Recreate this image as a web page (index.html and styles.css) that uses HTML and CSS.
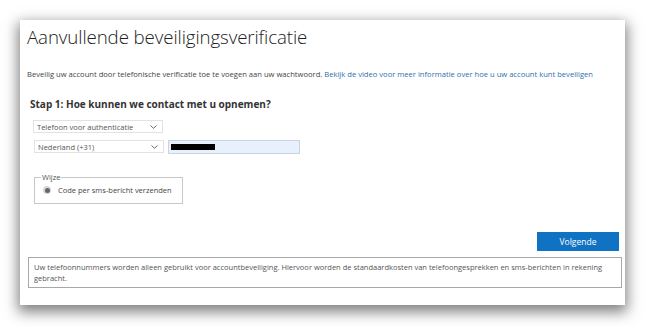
FILE: index.html
```html
<!DOCTYPE html>
<html lang="nl">
<head>
<meta charset="utf-8">
<link rel="stylesheet" href="styles.css">
</head>
<body>
<div class="card">
  <h1 class="title">Aanvullende beveiligingsverificatie</h1>
  <p class="intro">Beveilig uw account door telefonische verificatie toe te voegen aan uw wachtwoord. <a class="link">Bekijk de video voor meer informatie over hoe u uw account kunt beveiligen</a></p>
  <h2 class="step">Stap 1: Hoe kunnen we contact met u opnemen?</h2>
  <div class="row">
    <div class="select"><span>Telefoon voor authenticatie</span><svg class="chev" width="7" height="4" viewBox="0 0 7 4"><path d="M0.5 0.5 L3.5 3.3 L6.5 0.5" fill="none" stroke="#666" stroke-width="1"/></svg></div>
  </div>
  <div class="row row2">
    <div class="select"><span>Nederland (+31)</span><svg class="chev" width="7" height="4" viewBox="0 0 7 4"><path d="M0.5 0.5 L3.5 3.3 L6.5 0.5" fill="none" stroke="#666" stroke-width="1"/></svg></div>
    <div class="phone"><span class="redact"></span></div>
  </div>
  <fieldset class="method">
    <legend>Wijze</legend>
    <label class="opt"><span class="radio"><span class="dot"></span></span>Code per sms-bericht verzenden</label>
  </fieldset>
  <div class="actions"><button class="btn">Volgende</button></div>
  <div class="notice">Uw telefoonnummers worden alleen gebruikt voor accountbeveiliging. Hiervoor worden de standaardkosten van telefoongesprekken en sms-berichten in rekening gebracht.</div>
</div>
</body>
</html>
```

FILE: styles.css
```css
html, body { margin: 0; padding: 0; background: #fff; }
body { padding: 20px 0 21px 20px; font-family: "Open Sans", "Noto Sans", sans-serif; color: #333; }
.card {
  width: 605px; height: 285px; box-sizing: border-box;
  background: #fff;
  box-shadow: 0 5px 13px 2px rgba(0,0,0,0.5);
  padding: 3px 0 0 7px;
}
.title { margin: 0; font-weight: 300; font-size: 18.7px; line-height: 28px; color: #222; letter-spacing: -0.1px; }
.intro { margin: 18px 0 0 0; font-size: 7.6px; line-height: 10px; color: #444; white-space: nowrap; }
.link { color: #2f6fb0; }
.step { margin: 18px 0 0 3px; font-size: 10px; font-weight: 700; line-height: 14px; color: #333; }
.row { display: flex; gap: 4px; margin: 9px 0 0 6px; }
.row2 { margin-top: 7px; margin-left: 7px; }
.select {
  width: 130px; height: 13px; box-sizing: border-box; border: 1px solid #e2e2e2;
  display: flex; align-items: center; justify-content: space-between; padding: 0 5px 0 3px;
  font-size: 7.5px; color: #555;
}
.chev { display: block; }
.phone {
  width: 132px; height: 14px; box-sizing: border-box; border: 1px solid #c9d3e3; background: #e8f0fe;
  padding: 3px 0 0 2px;
}
.redact { display: block; width: 44px; height: 6px; background: #000; }
.method {
  margin: 19px 0 0 7px; width: 149px; height: 31px; box-sizing: border-box;
  border: 1px solid #c8c8c8; padding: 0 0 0 8px;
}
.method legend { font-size: 7.5px; color: #555; padding: 0 1px; margin-left: -2px; line-height: 8px; }
.opt { display: flex; align-items: center; gap: 7px; font-size: 7.5px; color: #444; margin-top: 4px; }
.radio { width: 8px; height: 8px; border-radius: 50%; background: #d8d8d8; display: flex; align-items: center; justify-content: center; }
.dot { width: 5px; height: 5px; border-radius: 50%; background: #666; }
.actions { display: flex; justify-content: flex-end; padding-right: 6px; margin-top: 28px; }
.btn {
  width: 82px; height: 19px; border: none; background: #0f72c3; color: #fff;
  font-family: inherit; font-size: 8.5px; padding: 0;
}
.notice {
  margin: 6px 0 0 1px; width: 594px; box-sizing: border-box; border: 1px solid #a8a8a8;
  padding: 4px 5px; font-size: 7.5px; line-height: 11px; color: #555; height: 31px;
}
```
